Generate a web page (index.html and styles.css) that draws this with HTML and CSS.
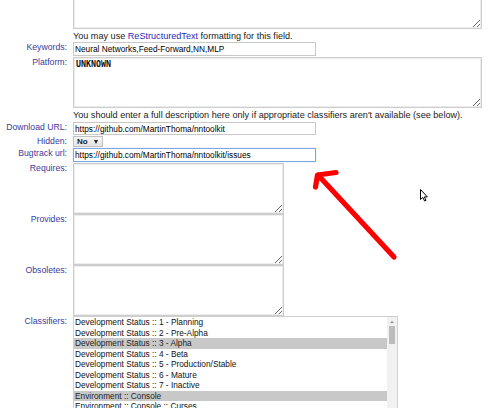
FILE: index.html
```html
<!DOCTYPE html>
<html>
<head>
<meta charset="utf-8">
<link rel="stylesheet" href="styles.css">
</head>
<body>
<div class="page">
  <form class="form">
    <div class="label"></div>
    <div class="field"><textarea class="ta ta-wide ta-first"></textarea></div>

    <div class="label"></div>
    <div class="help">You may use <a href="#">ReStructuredText</a> formatting for this field.</div>

    <label class="label">Keywords:</label>
    <div class="field f-gap"><input class="text" type="text" value="Neural Networks,Feed-Forward,NN,MLP"></div>

    <label class="label">Platform:</label>
    <div class="field"><textarea class="ta ta-wide mono">UNKNOWN</textarea></div>

    <div class="label"></div>
    <div class="help help-2">You should enter a full description here only if appropriate classifiers aren't available (see below).</div>

    <label class="label">Download URL:</label>
    <div class="field f-gap"><input class="text text-short" type="text" value="https://github.com/MartinThoma/nntoolkit"></div>

    <label class="label">Hidden:</label>
    <div class="field f-gap"><span class="mini-select">No<span class="caret"></span></span></div>

    <label class="label">Bugtrack url:</label>
    <div class="field f-gap"><input class="text focused" type="text" value="https://github.com/MartinThoma/nntoolkit/issues"></div>

    <label class="label">Requires:</label>
    <div class="field"><textarea class="ta ta-narrow"></textarea></div>

    <label class="label">Provides:</label>
    <div class="field"><textarea class="ta ta-narrow"></textarea></div>

    <label class="label">Obsoletes:</label>
    <div class="field"><textarea class="ta ta-narrow"></textarea></div>

    <label class="label label-cls">Classifiers:</label>
    <div class="field">
      <div class="listbox" role="listbox">
        <div class="options">
          <div class="opt">Development Status :: 1 - Planning</div>
          <div class="opt">Development Status :: 2 - Pre-Alpha</div>
          <div class="opt sel">Development Status :: 3 - Alpha</div>
          <div class="opt">Development Status :: 4 - Beta</div>
          <div class="opt">Development Status :: 5 - Production/Stable</div>
          <div class="opt">Development Status :: 6 - Mature</div>
          <div class="opt">Development Status :: 7 - Inactive</div>
          <div class="opt sel">Environment :: Console</div>
          <div class="opt">Environment :: Console :: Curses</div>
        </div>
        <div class="scrollbar">
          <span class="up"></span>
          <span class="thumb"></span>
        </div>
      </div>
    </div>
  </form>

  <svg class="annot" width="500" height="408" viewBox="0 0 500 408">
    <path d="M394 257 L318 175 M336 172.5 L317.5 175 L315.5 187" fill="none" stroke="#ff0000" stroke-width="5.2" stroke-linecap="round" stroke-linejoin="round"/>
  </svg>

  <svg class="cursor" width="9" height="13" viewBox="0 0 9 13">
    <path d="M0.5 0.5 L0.5 10.5 L2.8 8.4 L4.6 12 L6 11.3 L4.3 7.9 L7.4 7.9 Z" fill="#fff" stroke="#000" stroke-width="1" stroke-linejoin="round"/>
  </svg>
</div>
</body>
</html>
```

FILE: styles.css
```css
html, body {
  margin: 0;
  padding: 0;
  background: #ffffff;
}

.page {
  position: relative;
  width: 500px;
  height: 408px;
  overflow: hidden;
  font-family: "Liberation Sans", Arial, sans-serif;
}

.form {
  display: grid;
  grid-template-columns: 67px 1fr;
  column-gap: 6px;
  row-gap: 0;
  margin-top: -20px;
  align-items: start;
}

.label {
  text-align: right;
  color: #3b3b9b;
  font-size: 8.7px;
  line-height: 11px;
  white-space: nowrap;
}

.field {
  display: flex;
}

.f-gap {
  margin-bottom: 1px;
}

.help {
  height: 13px;
  font-size: 9.1px;
  line-height: 14px;
  color: #1a1a1a;
  white-space: nowrap;
}

.help-2 {
  height: 14px;
  line-height: 14px;
}

.help a {
  color: #1f1fb8;
  text-decoration: none;
}

.text {
  box-sizing: border-box;
  width: 243px;
  height: 14px;
  margin: 0;
  padding: 0 1px;
  border: 1px solid #c8c8c8;
  font-family: "Liberation Sans", Arial, sans-serif;
  font-size: 8.3px;
  color: #000;
  background: #fff;
  outline: none;
}

.text-short {
  height: 13px;
}

.focused {
  border-color: #7fa6e2;
  box-shadow: 0 0 1px #a9c3ef;
}

.ta {
  box-sizing: border-box;
  height: 51px;
  margin: 0;
  padding: 1px;
  border: 1px solid #cdcdcd;
  box-shadow: inset 0 0 0 1px #ededed;
  font-family: "Liberation Sans", Arial, sans-serif;
  font-size: 8.3px;
  background: #fff;
  outline: none;
  display: block;
}

.ta-first {
  height: 49px;
}

.ta-wide {
  width: 409px;
}

.ta-narrow {
  width: 211px;
}

.mono {
  font-family: "DejaVu Sans Mono", "Liberation Mono", monospace;
  font-size: 8.3px;
  font-weight: bold;
  line-height: 10px;
  padding: 1px 2px;
  color: #111;
}

.mini-select {
  position: relative;
  box-sizing: border-box;
  width: 30px;
  height: 11px;
  border: 1px solid #c2c2c2;
  background: linear-gradient(#f6f6f6, #e4e4e4);
  font-size: 8px;
  font-weight: bold;
  line-height: 9px;
  padding-left: 3px;
  color: #222;
}

.caret {
  position: absolute;
  right: 4px;
  top: 3px;
  width: 0;
  height: 0;
  border-left: 2px solid transparent;
  border-right: 2px solid transparent;
  border-top: 4px solid #222;
}

.listbox {
  box-sizing: border-box;
  width: 325px;
  height: 110px;
  border: 1px solid #cfcfcf;
  display: flex;
  background: #fff;
}

.options {
  flex: 1;
  overflow: hidden;
}

.opt {
  height: 10.5px;
  line-height: 10.5px;
  padding-left: 1px;
  font-size: 8.3px;
  color: #111;
  white-space: nowrap;
}

.opt.sel {
  background: #c8c8c8;
  color: #222;
}

.scrollbar {
  position: relative;
  width: 10px;
  background: #f1f1f1;
  flex: none;
}

.up {
  position: absolute;
  left: 3px;
  top: 4px;
  width: 0;
  height: 0;
  border-left: 2px solid transparent;
  border-right: 2px solid transparent;
  border-bottom: 2px solid #8a8a8a;
}

.thumb {
  position: absolute;
  left: 2px;
  top: 9px;
  width: 6px;
  height: 18px;
  background: #bdbdbd;
}

.annot {
  position: absolute;
  left: 0;
  top: 0;
  pointer-events: none;
}

.cursor {
  position: absolute;
  left: 420px;
  top: 189px;
}
```
